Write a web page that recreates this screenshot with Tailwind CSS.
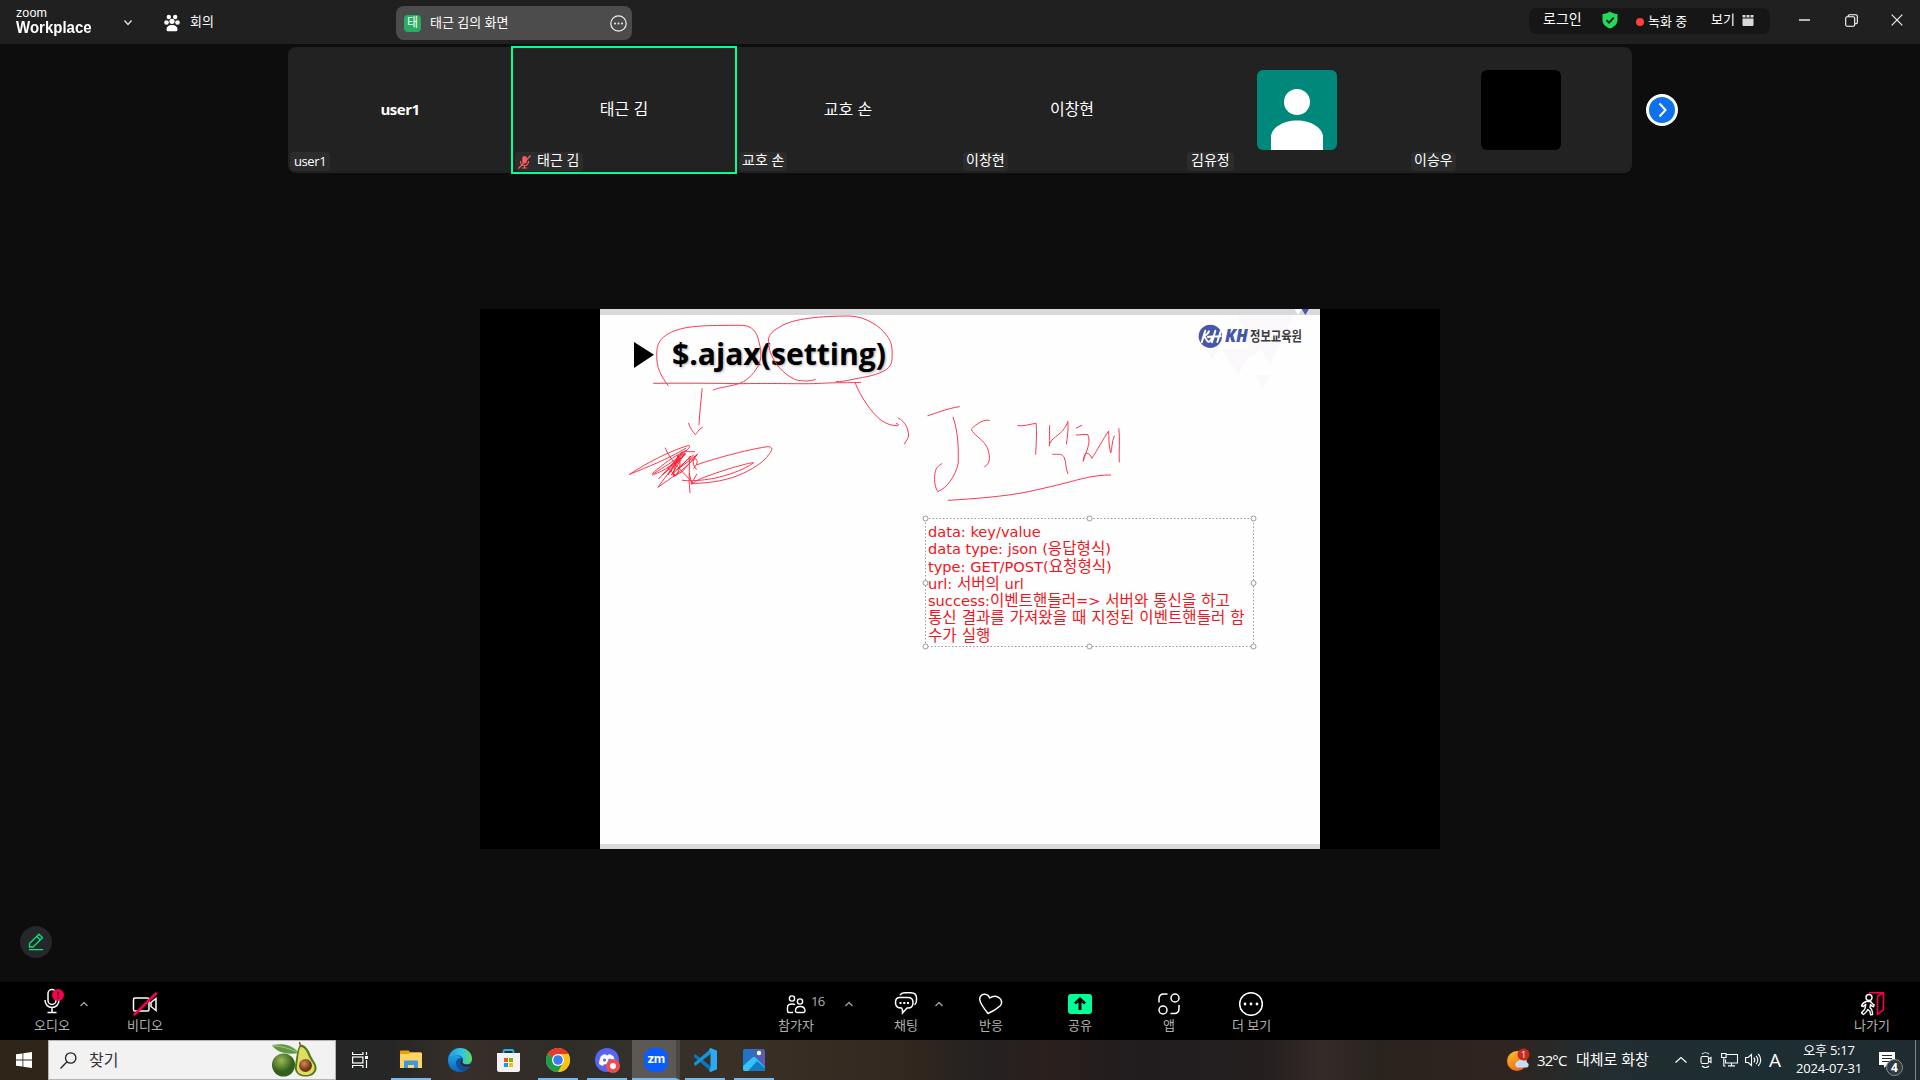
<!DOCTYPE html>
<html lang="ko">
<head>
<meta charset="utf-8">
<title>Zoom Workplace</title>
<script src="https://cdn.jsdelivr.net/npm/@tailwindcss/browser@4"></script>
</head>
<body class="flex h-[1080px] w-[1920px] flex-col overflow-hidden bg-[#0d0d0d] font-['Open_Sans','Noto_Sans_CJK_KR',sans-serif] text-white">

<!-- Title bar -->
<header class="flex h-11 shrink-0 items-start bg-[#202020] whitespace-nowrap">
  <div class="ml-4 flex w-[75px] flex-col pt-[7px] font-['Liberation_Sans',sans-serif]">
    <span class="h-3 text-[12.5px] leading-3 tracking-[0.1px]">zoom</span>
    <span class="h-4 origin-top scale-y-110 text-[15px] leading-4 font-bold">Workplace</span>
  </div>
  <svg class="mt-[18px] ml-8 h-2.5 w-2.5" viewBox="0 0 10 10" fill="none" stroke="#ddd" stroke-width="1.4"><path d="M1.5 2.5 5 6.500 8.500 2.500"/></svg>
  <svg class="mt-[14px] ml-[31px] h-[18px] w-4" viewBox="0 0 16 18" fill="#fff"><circle cx="4.800" cy="3" r="2.200"/><circle cx="11.200" cy="3" r="2.200"/><circle cx="8" cy="7.300" r="2.600"/><circle cx="2.500" cy="8.500" r="2.300"/><circle cx="13.500" cy="8.500" r="2.300"/><path d="M2.500 15.500c0-3 2-4.500 5.500-4.500s5.500 1.500 5.500 4.500c0 1.300-.8 1.800-2 1.800h-7c-1.200 0-2-.5-2-1.800z"/></svg>
  <span class="mt-[11px] ml-2.5 w-6 text-[13px] leading-5">회의</span>
  <div class="mt-1.5 ml-[182px] flex h-[34px] w-[236px] items-center rounded-lg bg-[#4c4c4c] pr-[5px] pl-2">
    <span class="flex h-[17px] w-[17px] items-center justify-center rounded bg-[#27ae60] text-[12px] leading-none">태</span>
    <span class="ml-[9px] flex-1 pb-0.5 text-[13px] leading-5">태근 김의 화면</span>
    <svg class="h-[17px] w-[17px]" viewBox="0 0 17 17" fill="none" stroke="#f0f0f0" stroke-width="1.200"><circle cx="8.500" cy="8.500" r="7.700"/><g fill="#f0f0f0" stroke="none"><circle cx="5" cy="8.500" r="1"/><circle cx="8.500" cy="8.500" r="1"/><circle cx="12" cy="8.500" r="1"/></g></svg>
  </div>
  <div class="mt-2 ml-[897px] flex h-[26px] w-[241px] rounded-lg bg-[#161616]">
    <span class="ml-3.5 w-[39px] text-[14px] leading-[21px]">로그인</span>
    <svg class="mt-[3px] ml-5 h-[18px] w-4" viewBox="0 0 16 18"><path d="M8 .5c2 1.500 4.500 2.300 7.500 2.500v6c0 4.500-3.500 7-7.500 8.500C4 16 .5 13.500.5 9V3C3.500 2.800 6 2 8 .5z" fill="#23d959"/><path d="M4.500 9.200 7 11.700l4.700-5" fill="none" stroke="#161616" stroke-width="1.700"/></svg>
    <span class="mt-2.5 ml-[18px] h-2 w-2 rounded-full bg-[#ff3f3f]"></span>
    <span class="ml-1 w-10 pt-0.5 text-[13px] leading-[22px]">녹화 중</span>
    <span class="ml-[23px] w-[25px] text-[13px] leading-[22px]">보기</span>
    <svg class="mt-[7px] ml-1.5 h-[11px] w-3" viewBox="0 0 12 11" fill="#d8d8d8"><path d="M.5 0h3v2.500h-3zM4.500 0h3v2.500h-3zM8.500 0h3v2.500h-3zM.5 3.500h11V10a1 1 0 0 1-1 1h-9a1 1 0 0 1-1-1z"/></svg>
  </div>
  <svg class="mt-[13px] ml-[29px] h-3.5 w-3" viewBox="0 0 12 14"><path d="M0 6h11v2H0z" fill="#b5b5b5"/></svg>
  <svg class="mt-3.5 ml-[34px] h-[13px] w-[13px]" viewBox="0 0 13 13" fill="none" stroke="#fff" stroke-width="1.100"><rect x=".7" y="2.700" width="9" height="9.500" rx="1.500"/><path d="M3.200 2.500V2A1.300 1.300 0 0 1 4.500.7H11A1.300 1.300 0 0 1 12.300 2v6.500A1.300 1.300 0 0 1 11 9.800h-1"/></svg>
  <svg class="mt-3.5 ml-[33px] h-3 w-3" viewBox="0 0 12 12" stroke="#eee" stroke-width="1.200"><path d="M.7.7l10.600 10.600M11.300.7.7 11.300"/></svg>
</header>

<!-- Participant strip -->
<section class="flex h-[265px] shrink-0 items-start pt-[3px] pl-[288px]">
  <div class="grid h-[126px] w-[1344px] grid-cols-6 rounded-lg bg-[#222] text-[14px]">
    <div class="relative flex items-center justify-center">
      <b class="pb-0.5 text-[15px] leading-5 tracking-[-0.5px]">user1</b>
      <span class="absolute bottom-0.5 left-0.5 h-[19px] rounded bg-[#2c2c2c] px-1 leading-[19px] text-[13px] tracking-[-0.4px]">user1</span>
    </div>
    <div class="relative flex items-center justify-center">
      <i class="absolute -inset-px border-2 border-[#00ff94]"></i>
      <span class="pb-0.5 text-[16px]">태근 김</span>
      <span class="absolute bottom-0.5 left-[3px] flex h-[19px] items-center gap-1.5 rounded bg-[#2c2c2c] pr-1 pl-[3px] leading-[15px]">
        <svg class="h-3.5 w-[13px]" viewBox="0 0 13 14"><rect x="4.300" y="1" width="4.500" height="7.500" rx="2.200" fill="#ff5c5c"/><path d="M2.500 6c0 6 8 6 8 0M6.500 10.500V13M4 13h5M12.500.5.5 13.500" fill="none" stroke="#ff5c5c" stroke-width="1.200"/></svg>
        <span class="pb-1">태근 김</span>
      </span>
    </div>
    <div class="relative flex items-center justify-center">
      <span class="pb-0.5 text-[16px]">교호 손</span>
      <span class="absolute bottom-0.5 left-[3px] h-[19px] rounded bg-[#2c2c2c] px-[3px] leading-[15px]">교호 손</span>
    </div>
    <div class="relative flex items-center justify-center">
      <span class="pb-0.5 text-[16px]">이창현</span>
      <span class="absolute bottom-0.5 left-[3px] h-[19px] rounded bg-[#2c2c2c] px-[3px] leading-[15px]">이창현</span>
    </div>
    <div class="relative flex items-center justify-center">
      <svg class="ml-px h-20 w-20 rounded-md" viewBox="0 0 80 80"><rect width="80" height="80" fill="#00897b"/><circle cx="40" cy="32" r="13" fill="#fff"/><path d="M14 80V67c0-9 12-16.500 26-16.500S66 58 66 67v13z" fill="#fff"/></svg>
      <span class="absolute bottom-0.5 left-[3px] h-[19px] rounded bg-[#2c2c2c] px-1 leading-[15px]">김유정</span>
    </div>
    <div class="relative flex items-center justify-center">
      <div class="ml-px h-20 w-20 rounded-md bg-black"></div>
      <span class="absolute bottom-0.5 left-[3px] h-[19px] rounded bg-[#2c2c2c] px-[3px] leading-[15px]">이승우</span>
    </div>
  </div>
  <svg class="mt-[47px] ml-3.5 h-8 w-8" viewBox="0 0 32 32"><circle cx="16" cy="16" r="14.500" fill="#0e72ed" stroke="#fff" stroke-width="3"/><path d="m13.500 9.500 6 6.500-6 6.500" fill="none" stroke="#fff" stroke-width="2"/></svg>
</section>

<!-- Shared screen -->
<main class="mx-auto flex h-[540px] w-[960px] shrink-0 justify-center bg-black">
  <div class="relative h-[540px] w-[720px] bg-[#fefefe]">
    <svg class="absolute inset-0 h-full w-full" viewBox="0 0 720 540">
      <path d="M0 0h720v6H0zM0 535h720v5H0z" fill="#d9d9dc"/>
      <!-- corner triangles and logo -->
      <g transform="translate(540 -9) scale(.33333)">
        <path d="M295 46h165l-70 150-25-50-30 25zM245 147h97l-48 76zM195 147h45l-22 32zM345 225h46l-23 40z" fill="#faf8fb"/>
        <path d="M464 27h22l-12 18z" fill="#fff"/><path d="M485 27h22l-11 18z" fill="#4a55ae"/>
        <circle cx="211" cy="109" r="35" fill="#4757a8"/>
        <path d="M196 92l-11 35M207 94c-4 9-12 13-17 15 8 1 8 12 14 16 5 2 9-4 11-10M226 92l-10 35M242 94l-10 32M204 111c7-3 14 0 38-2" fill="none" stroke="#fff" stroke-width="6" stroke-linecap="round"/>
      </g>
      <text x="625" y="33" font-family="Open Sans, sans-serif" font-size="17" font-weight="800" font-style="italic" fill="#4757a8" textLength="23" lengthAdjust="spacingAndGlyphs">KH</text>
      <text x="650" y="31.500" font-family="Noto Sans CJK KR, sans-serif" font-size="13.500" font-weight="700" fill="#3a3a3a" textLength="52" lengthAdjust="spacingAndGlyphs">정보교육원</text>
      <!-- heading -->
      <path d="M34 33 54 45.800 34 59z" fill="#000"/>
      <g font-family="Open Sans, sans-serif" font-size="31" font-weight="700">
        <text x="73" y="57" fill="#aaa" textLength="214" lengthAdjust="spacingAndGlyphs" aria-hidden="true" class="blur-[1px]">$.ajax(setting)</text>
        <text x="72" y="55.500" fill="#000" textLength="214" lengthAdjust="spacingAndGlyphs">$.ajax(setting)</text>
      </g>
      <!-- pen strokes -->
      <g transform="translate(0 -9) scale(.35714 .33333)" fill="none" stroke="#fb3a50" stroke-width="1" stroke-linecap="round" stroke-linejoin="round">
        <g class="[&>path]:[vector-effect:non-scaling-stroke]">
          <path d="M191 257C180 240 160 215 159 175C158 140 160 115 205 94C245 77 290 76 400 76C425 78 440 95 445 125C455 165 450 185 440 203C430 222 410 245 383 253C355 261 335 262 317 270"/>
          <path d="M603 238C590 246 555 243 545 238C510 220 490 190 478 160C465 115 470 100 505 80C540 55 620 48 700 48C745 50 785 80 802 105C812 120 818 130 818 160C818 185 818 200 795 213C765 230 730 232 700 240C685 243 675 245 661 245"/>
          <path d="M150 250C250 249 330 250 400 251C500 249 560 253 620 250C660 247 700 249 730 247"/>
          <path d="M286 266C283 300 279 340 277 374M248 370C252 385 260 395 267 404C272 400 275 388 287 382"/>
          <path d="M715 250C730 290 760 340 790 363C805 373 820 378 834 377C838 375 836 371 830 371M835 354C855 365 863 385 864 405C864 415 857 422 852 432"/>
          <path d="M918 347C940 340 970 326 1006 320M989 352C1003 400 1004 440 1003 490C995 530 970 565 946 575C933 555 936 520 941 508C945 500 950 495 957 491"/>
          <path d="M1090 361C1070 355 1040 385 1040 388C1045 405 1070 415 1083 440C1093 465 1095 490 1077 500"/>
          <path d="M1170 377C1185 380 1205 372 1221 370C1224 400 1221 430 1220 463M1259 377C1257 395 1261 415 1258 438C1259 415 1290 405 1300 385C1308 375 1309 366 1310 364C1312 385 1309 410 1306 432M1268 463C1285 463 1295 460 1300 473C1306 490 1303 505 1310 521"/>
          <path d="M1334 384 1349 376M1334 405C1345 405 1355 402 1366 404C1376 430 1360 455 1353 484C1354 475 1355 465 1361 459C1370 460 1373 465 1377 475C1390 455 1410 415 1424 393C1426 410 1423 435 1430 459C1434 445 1433 425 1440 408M1453 386C1456 420 1453 450 1454 486"/>
          <path d="M975 601C1050 596 1130 590 1200 575C1260 561 1300 550 1350 536C1380 528 1405 525 1430 525"/>
          <path d="M83 523C120 495 200 450 249 436C258 443 230 460 215 475C185 500 155 515 147 525C185 510 205 495 240 450L162 562C190 540 250 500 273 463M83 523C135 500 185 480 240 445M183 444C195 480 235 520 260 548M147 520C180 490 205 470 235 455H265"/>
          <path d="M250 470C252 500 247 540 252 578M231 541C270 545 300 538 320 535C350 528 405 510 430 488C415 488 330 515 285 535C270 540 262 550 255 552L271 523M250 520 257 552M272 494C330 472 430 445 470 440C485 440 483 450 475 460C455 495 405 520 370 533C320 549 285 549 255 551"/>
          <path stroke="#ff2030" d="M165 536C190 505 215 480 230 455L190 525 237 460 200 525 255 468 215 510 273 463 230 515 205 530C207 505 215 485 218 465C228 485 225 510 212 527L190 505 240 462 177 523M250 478 262 465M262 505C272 495 277 480 266 476C259 480 258 495 270 508"/>
        </g>
      </g>
      <!-- selection frame -->
      <rect x="325.500" y="209.500" width="328" height="128" fill="none" stroke="#999" stroke-dasharray="1.500 2"/>
      <g fill="#fff" stroke="#999"><circle cx="325.500" cy="209.500" r="2.500"/><circle cx="489.500" cy="209.500" r="2.500"/><circle cx="653.500" cy="209.500" r="2.500"/><circle cx="325.500" cy="274" r="2.500"/><circle cx="653.500" cy="274" r="2.500"/><circle cx="325.500" cy="337.500" r="2.500"/><circle cx="489.500" cy="337.500" r="2.500"/><circle cx="653.500" cy="337.500" r="2.500"/></g>
    </svg>
    <div class="absolute top-[214px] left-[328px] font-['DejaVu_Sans','Noto_Sans_CJK_KR',sans-serif] text-[14.6px] whitespace-nowrap text-[#f21420] [&>p]:h-[17.300px] [&>p]:leading-[17.300px] [&_span]:text-[15.600px] [&_span]:leading-none">
      <p>data: key/value</p>
      <p>data type: json (<span>응답형식</span>)</p>
      <p>type: GET/POST(<span>요청형식</span>)</p>
      <p>url: <span>서버의</span> url</p>
      <p>success:<span>이벤트핸들러</span>=&gt; <span>서버와 통신을 하고</span></p>
      <p><span>통신 결과를 가져왔을 때 지정된 이벤트핸들러 함</span></p>
      <p><span>수가 실행</span></p>
    </div>
  </div>
</main>

<section class="h-[133px] shrink-0 pt-[77px] pl-5">
  <div class="flex h-8 w-8 items-center justify-center rounded-full bg-[#26272b]">
    <svg class="h-[18px] w-4" viewBox="0 0 16 18" fill="none" stroke="#12e07c" stroke-width="1.300"><path d="M1.500 10.500 11 1.200l3.500 3.500L5 14H1.500zM8.800 3.500l3.500 3.500M1 16.700h14"/></svg>
  </div>
</section>

<!-- Meeting controls -->
<nav class="flex h-[58px] shrink-0 bg-black pl-8 text-center text-[13px] leading-[18px] whitespace-nowrap text-[#b0b0b0]">
  <div class="flex w-10 flex-col items-center pt-1.5">
    <svg class="h-7 w-10" viewBox="0 0 40 28" fill="none" stroke="#fff" stroke-width="1.500"><rect x="16" y="1.500" width="8" height="15" rx="4"/><path d="M13 12c0 10 14 10 14 0M20 19.500v5M15.500 24.500h9"/><circle cx="26" cy="7" r="6" fill="#f8004f" stroke="none"/><path d="M26 3.500v4.500M26 9.200v1.500" stroke="#300"/></svg>
    <span>오디오</span>
  </div>
  <svg class="mt-4 ml-1.5 h-3 w-3" viewBox="0 0 12 12" fill="none" stroke="#999" stroke-width="1.500"><path d="M2.500 8 6 4.500 9.500 8"/></svg>
  <div class="ml-[35px] flex w-10 flex-col items-center pt-1.5">
    <svg class="h-7 w-10" viewBox="0 0 40 28" fill="none" stroke="#fff" stroke-width="1.500"><rect x="8.500" y="10" width="15.500" height="13" rx="1.500"/><path d="M31 10.500v12l-5-4v-4z"/><path d="M9.500 26.500 31 5.500" stroke="#f8004f" stroke-width="2.500" stroke-linecap="round"/></svg>
    <span>비디오</span>
  </div>
  <div class="ml-[611px] flex w-10 flex-col items-center pt-1.5">
    <svg class="h-7 w-10" viewBox="0 0 40 28" fill="none" stroke="#fff" stroke-width="1.400"><circle cx="16" cy="10.500" r="2.600"/><circle cx="24" cy="13.500" r="2.600"/><path d="M17 24.500h-4c-1 0-1.500-.5-1.500-1.500v-3.500c0-2.500 2-3.500 4.500-3.500 1.300 0 2.300.3 3 .8M21 24.500h6.500c1 0 1.500-.5 1.500-1.400 0-3-2-4.600-4.800-4.600s-4.800 1.600-4.800 4.600c0 .9.600 1.400 1.600 1.400z"/></svg>
    <span>참가자</span>
  </div>
  <span class="-ml-[5px] w-[13px] pt-[11px] leading-4 tracking-[-0.8px]">16</span>
  <svg class="mt-4 ml-[19px] h-3 w-3" viewBox="0 0 12 12" fill="none" stroke="#999" stroke-width="1.500"><path d="M2.500 8 6 4.500 9.500 8"/></svg>
  <div class="ml-[31px] flex w-10 flex-col items-center pt-1.5">
    <svg class="h-7 w-10" viewBox="0 0 40 28" fill="none" stroke="#fff" stroke-width="1.500"><path d="M13.500 9.500H22c3.500 0 5 2 5 5.200 0 3.300-1.500 5.300-5 5.300h-1l-4.500 5V22l-1-2c-4 0-6-1.700-6-5.300 0-3.200 1-5.200 4-5.200zM14 7c1-1.700 2.500-2.200 4.500-2.200H25c3.500 0 5.500 1.700 5.500 5.400v2c0 2.500-.8 3.800-2 4.600"/><path d="M13.500 15h2M17.300 15h2M21 15h2" stroke-width="2"/></svg>
    <span>채팅</span>
  </div>
  <svg class="mt-4 ml-[7px] h-3 w-3" viewBox="0 0 12 12" fill="none" stroke="#999" stroke-width="1.500"><path d="M2.500 8 6 4.500 9.500 8"/></svg>
  <div class="ml-[26px] flex w-10 flex-col items-center pt-1.5">
    <svg class="h-7 w-10" viewBox="0 0 40 28" fill="none" stroke="#fff" stroke-width="1.500" stroke-linejoin="round"><path d="M17 25.500C13 20.500 9 15 8.700 11.500 8.500 8 11 6 14 6.200c2.500.2 4 1.800 4.700 3.800 2.500-1.800 6-2.200 8.800-.7 3.500 2 4.200 6 1.500 8.700-3 2.800-7.500 5.500-12 7.500z"/></svg>
    <span>반응</span>
  </div>
  <div class="ml-[49px] flex w-10 flex-col items-center pt-1.5">
    <svg class="h-7 w-10" viewBox="0 0 40 28" fill="none"><rect x="8" y="6" width="24" height="20" rx="3" fill="#00ff94"/><path d="M20 22V11.500M15 15.500l5-4.500 5 4.500" stroke="#000" stroke-width="3"/></svg>
    <span>공유</span>
  </div>
  <div class="ml-[49px] flex w-10 flex-col items-center pt-1.5">
    <svg class="h-7 w-10" viewBox="0 0 40 28" fill="none" stroke="#fff" stroke-width="1.500"><circle cx="26" cy="10" r="4"/><circle cx="14" cy="22" r="4"/><path d="M10 14.500V11c0-3 1.500-5 5-5h3.500M30 17v3.500c0 3-1.500 5-5 5h-3.500"/></svg>
    <span>앱</span>
  </div>
  <div class="ml-[42px] flex w-10 flex-col items-center pt-1.5">
    <svg class="h-7 w-10" viewBox="0 0 40 28" fill="none" stroke="#fff" stroke-width="1.500"><circle cx="20" cy="16" r="11.300"/><g fill="#fff" stroke="none"><circle cx="14" cy="16" r="1.400"/><circle cx="20" cy="16" r="1.400"/><circle cx="26" cy="16" r="1.400"/></g></svg>
    <span class="pl-px">더 보기</span>
  </div>
  <div class="ml-[581px] flex w-10 flex-col items-center pt-1.5">
    <svg class="h-7 w-10" viewBox="0 0 40 28" fill="none" stroke="#fff" stroke-width="1.400" stroke-linejoin="round"><path d="M17 4.800h14.500v17l-6 4.500V8.500l6-3.700" stroke="#f8004f" stroke-width="1.600"/><circle cx="17" cy="9.500" r="3"/><path d="M14 13.500c-2.500 1-4 2.500-4.500 4.500l1.700.6 2.600-2.300-.8 4.200c-1 2-2.500 3-3.500 4.500l2 1.500c2-1.500 3.500-3 4.300-5l2 1.800c.4 1.400.5 2.200.8 3.600l2-.4c0-2-.4-3.500-1-5l-1.600-2 .5-3c1 1.400 1.800 2 3 2.300l.6-1.800c-2-1-2.300-3-4-3.500z"/></svg>
    <span>나가기</span>
  </div>
</nav>

<!-- Windows taskbar -->
<footer class="flex h-10 shrink-0 items-stretch bg-[linear-gradient(90deg,#302519_0px,#302519_60px,#252626_350px,#252625_390px,#382f28_460px,#2f2c28_560px,#33312c_620px,#3a3026_740px,#33281f_900px,#242120_980px,#2a1f1d_1050px,#211d1e_1140px,#251f20_1270px,#342b27_1320px,#29231e_1380px,#30241f_1500px,#222d30_1600px,#1d2e32_1760px,#202b30_1920px)] whitespace-nowrap [&>*]:shrink-0">
  <div class="flex w-12 items-center justify-center">
    <svg class="h-4 w-4" viewBox="0 0 16 16" fill="#fff"><path d="M0 2.300 6.500 1.400v6.200H0zM7.300 1.300 16 0v7.600H7.300zM0 8.400h6.500v6.200L0 13.700zM7.300 8.400H16V16l-8.700-1.300z"/></svg>
  </div>
  <div class="flex w-72 items-center border border-[#b4b4b4] bg-[#f2f2f2] pl-[11px] text-[16px] leading-5 text-[#333]">
    <svg class="h-[17px] w-[17px]" viewBox="0 0 17 17" fill="none" stroke="#222" stroke-width="1.300"><circle cx="10.700" cy="6" r="5.200"/><path d="M7 9.800.5 16.500"/></svg>
    <span class="ml-3 flex-1">찾기</span>
    <svg class="mr-[17px] h-9 w-[46px]" viewBox="0 0 46 36">
      <defs><radialGradient id="avo" cx=".4" cy=".3"><stop offset="0" stop-color="#9dbb55"/><stop offset="1" stop-color="#335e1c"/></radialGradient><radialGradient id="pit" cx=".4" cy=".35"><stop offset="0" stop-color="#d58b50"/><stop offset="1" stop-color="#70351a"/></radialGradient></defs>
      <circle cx="11.500" cy="23" r="11.500" fill="url(#avo)"/><path d="M0 3c10-2 20-1 27 8-11 2-22 0-27-8z" fill="#619845"/><path d="M1 3.500c9 1 17 3 26 7.500" stroke="#a9ce7c" stroke-width="1" fill="none"/>
      <path d="M28 3c4-1 8 3 11 11 3 6 6 8 5.500 13-1 5.500-6 8-12 7.500-7-.5-10.500-5-9.500-11 1-5 2-17 5-20.500z" fill="#4e7c1c"/><path d="M28.500 5c3-.5 6 3 8.500 10 3 6 6 7 5.500 12-1 4-5 6.500-10 6-6-.5-8.500-4-7.500-9.500 1-5 1.500-16 3.500-18.500z" fill="#e1dc60"/><circle cx="33.500" cy="23.500" r="6.500" fill="url(#pit)"/><path d="M28.500 4 27.500 0" stroke="#8a4b22" stroke-width="1.500"/>
    </svg>
  </div>
  <div class="flex w-12 items-center justify-center">
    <svg class="h-4 w-4" viewBox="0 0 16 16" fill="none" stroke="#fff" stroke-width="1.200"><path d="M.6 0v2.500h10.300V0M.6 16v-2.500h10.300V16M14.500 0v3M14.500 8v8"/><rect x=".6" y="5" width="10.300" height="6"/><path d="M13 4h3v3h-3z" fill="#fff" stroke="none"/></svg>
  </div>
  <div class="ml-[7px] flex w-10 items-center justify-center border-b-2 border-[#76b9ed]">
    <svg class="mt-0.5 h-5 w-[22px]" viewBox="0 0 22 20"><path d="M0 1.500A1 1 0 0 1 1 .5h7.500l2 2H21v3H0z" fill="#e7a20e"/><path d="M0 4h9l1.500-1.500H21a1 1 0 0 1 1 1V18H0z" fill="#ffd462"/><path d="M4 18v-6.500a1 1 0 0 1 1-1h12a1 1 0 0 1 1 1V18h-4v-3H8v3z" fill="#3d98e0"/></svg>
  </div>
  <div class="ml-[9px] flex w-10 items-center justify-center">
    <svg class="h-6 w-6" viewBox="0 0 24 24"><defs><linearGradient id="e1"><stop offset="0" stop-color="#2298e0"/><stop offset=".6" stop-color="#30c8dd"/><stop offset="1" stop-color="#65dc55"/></linearGradient><linearGradient id="e2" x2="0" y2="1"><stop offset="0" stop-color="#1ca4e7"/><stop offset="1" stop-color="#0d62bd"/></linearGradient></defs><circle cx="12" cy="12" r="12" fill="#124f94"/><path d="M0 11C1 4.500 6 0 12 0c7 0 12 5 12 10.500 0 4-3 6-6 6-2.500 0-4-1-3.500-2.200C16 12 15 8 10.500 7.500 6 7 1.500 8.500 0 11z" fill="url(#e1)"/><path d="M0 12C1 8.500 5 7 9 7.500c2.500.3 4 1.500 4.500 2.500-4-.5-6 2.500-5.500 5.500.5 4 4 7.500 8 7.500C8 26 0 21 0 12z" fill="url(#e2)"/><path d="M23 17.500c-2.500 2-9.500 2-10.500-3 0-1.500 1-2.500 1.500-3-.8 3 2 5 5 5 2 0 4-.5 4.600-.8z" fill="#2e2c28"/></svg>
  </div>
  <div class="ml-2 flex w-10 items-center justify-center">
    <svg class="h-[23px] w-[23px]" viewBox="0 0 23 23"><path d="M6.500 5V2.500A1.500 1.500 0 0 1 8 1h7a1.500 1.500 0 0 1 1.500 1.500V5" fill="none" stroke="#28b3ec" stroke-width="1.800"/><path d="M0 4h23v16.500a2.500 2.500 0 0 1-2.500 2.500h-18A2.500 2.500 0 0 1 0 20.500z" fill="#f2f2f2"/><path d="M7 9h4v4H7z" fill="#f25022"/><path d="M12 9h4v4h-4z" fill="#7fba00"/><path d="M7 14h4v4H7z" fill="#00a4ef"/><path d="M12 14h4v4h-4z" fill="#ffb900"/></svg>
  </div>
  <div class="ml-2.5 flex w-10 items-center justify-center border-b-2 border-[#76b9ed]">
    <svg class="mt-0.5 h-6 w-6" viewBox="0 0 24 24"><circle cx="12" cy="12" r="12" fill="#fbc116"/><path d="M12 12 1.600 6a12 12 0 0 1 20.800 0z" fill="#e33b2e"/><path d="M1.600 6a12 12 0 0 0 10.400 18l5.200-9-5.200-3z" fill="#229a4b"/><path d="M12 6h10.400A12 12 0 0 1 12 24l5.200-9z" fill="#fbc116"/><circle cx="12" cy="12" r="6" fill="#fff"/><circle cx="12" cy="12" r="4.800" fill="#3b7ded"/></svg>
  </div>
  <div class="ml-[9px] flex w-10 items-center justify-center border-b-2 border-[#76b9ed]">
    <svg class="mt-0.5 h-[25px] w-[25px]" viewBox="0 0 25 25"><circle cx="12" cy="12" r="12" fill="#5865f2"/><path d="M6 8c2-1.500 3.500-1.800 4.500-1.800l.6 1h2l.6-1c1 0 2.500.3 4.500 1.800 1.500 3 2 6 2 8-1.500 1.200-3 1.800-4 1.800l-1-1.500H9l-1 1.500c-1 0-2.500-.6-4-1.800 0-2 .5-5 2-8z" fill="#fff"/><circle cx="9.500" cy="12" r="1.600" fill="#5865f2"/><circle cx="14.800" cy="12" r="1.600" fill="#5865f2"/><circle cx="18" cy="18" r="7" fill="#ed4c51"/><circle cx="18" cy="18" r="3" fill="#fff"/></svg>
  </div>
  <div class="ml-[5px] flex w-12 border-r-4 border-b-2 border-r-[#494744] border-b-[#76b9ed] bg-[#5c5854] pl-3">
    <div class="mt-2 flex h-6 w-6 shrink-0 items-center justify-center rounded-[9px] bg-[#0b5cff] pb-0.5 font-['Inter',sans-serif] text-[12.500px] leading-none font-bold tracking-[-0.5px]">zm</div>
  </div>
  <div class="ml-[5px] flex w-10 items-center justify-center border-b-2 border-[#76b9ed]">
    <svg class="mt-0.5 h-6 w-6" viewBox="0 0 24 24"><path d="m1 7.500 1.500-1.200L17.500 18v5L1 9z" fill="#0878be"/><path d="m1 16.500 1.500 1.200L17.500 6V1L1 15z" fill="#1494da"/><path d="M17.500 0 24 2.800v18.400L17.500 24l-1.500-1 1.500-4V5L16 1z" fill="#2aaaf2"/></svg>
  </div>
  <div class="ml-[9px] flex w-10 items-center justify-center border-b-2 border-[#76b9ed]">
    <svg class="mt-0.5 h-[22px] w-[22px]" viewBox="0 0 22 22"><defs><linearGradient id="ph" x2="1"><stop offset="0" stop-color="#157ac8"/><stop offset="1" stop-color="#6158b2"/></linearGradient></defs><rect width="22" height="22" rx="2" fill="url(#ph)"/><path d="M0 17 9.500 8.500c1-.9 2-.9 3 0L22 18v2a2 2 0 0 1-2 2H2a2 2 0 0 1-2-2z" fill="#32c5f3"/><path d="M5 22 14 12l8 7v1a2 2 0 0 1-2 2z" fill="#127bc8"/><circle cx="16" cy="4" r="2.200" fill="#fff"/></svg>
  </div>
  <div class="ml-[733px] flex w-[142px] items-center text-[15px]">
    <svg class="h-6 w-[23px] shrink-0" viewBox="0 0 23 24"><defs><linearGradient id="sun" x2=".5" y2="1"><stop offset="0" stop-color="#fac02e"/><stop offset="1" stop-color="#ee6d15"/></linearGradient></defs><circle cx="10" cy="13" r="10" fill="url(#sun)"/><path d="M10 19.500a3.500 3.500 0 0 1 1.500-6.500 5 5 0 0 1 8.500 1.500 2.700 2.700 0 0 1 0 5z" fill="#c8dcfb"/><circle cx="16.500" cy="6.500" r="6" fill="#c42b1c"/><text x="16.500" y="10" font-family="Open Sans, sans-serif" font-size="9" text-anchor="middle" fill="#fff">1</text></svg>
    <span class="ml-[7px] w-[38px] tracking-[-0.9px]">32°C</span><span class="pb-px pl-px">대체로 화창</span>
  </div>
  <div class="ml-[26px] flex w-[114px] items-center">
    <svg class="h-3 w-3" viewBox="0 0 12 12" fill="none" stroke="#fff" stroke-width="1.200"><path d="m.5 8.500 5.500-5 5.500 5"/></svg>
    <svg class="ml-[13px] h-4 w-3" viewBox="0 0 12 16" fill="none" stroke="#fff" stroke-width="1.100"><rect x="1" y="4.500" width="7.500" height="7" rx="1.500"/><path d="m8.500 7 2.500-1.500v5L8.500 9M2 2.200C4 .3 7 .3 9 2.200M2 14c2 1.800 5 1.800 7 0"/></svg>
    <svg class="ml-[9px] h-4 w-[17px]" viewBox="0 0 17 16" fill="none" stroke="#fff" stroke-width="1.100"><path d="M5.500 2.500h11v8.500H4.500V7.500M7 13.900h7M10.500 11v3M.6 1.500h4.500v4H.6zM2.800 5.500V14h1.700"/></svg>
    <svg class="ml-[7px] h-4 w-[17px]" viewBox="0 0 17 16" fill="none" stroke="#fff" stroke-width="1.100"><path d="M.6 5.500h2.500L6.500 2.500v11L3.100 10.500H.6zM8.800 5.700c1.200 1.300 1.200 3.300 0 4.600M11 3.800c2.400 2.400 2.400 6 0 8.400M13.200 2c3.400 3.400 3.400 8.600 0 12"/></svg>
    <span class="ml-[7px] text-[19px] leading-6">A</span>
  </div>
  <div class="ml-1 flex w-[72px] flex-col items-center pt-px text-[13px] leading-[18px] tracking-[-0.2px]"><span>오후 5:17</span><span>2024-07-31</span></div>
  <svg class="mt-3 ml-3.5 h-6 w-6" viewBox="0 0 24 24"><path d="M0 0h16v13H8l-3 3v-3H0z" fill="#fff"/><path d="M3 3.500h10M3 6.500h10M3 9.500h7" stroke="#222c30" stroke-width="1.200"/><circle cx="15.500" cy="15.500" r="8" fill="#303b3f" stroke="#8a9193"/><text x="15.500" y="20" font-family="Open Sans, sans-serif" font-size="12" font-weight="700" text-anchor="middle" fill="#fff">4</text></svg>
  <i class="ml-3 w-px bg-[#7f888b]"></i>
</footer>
</body>
</html>
